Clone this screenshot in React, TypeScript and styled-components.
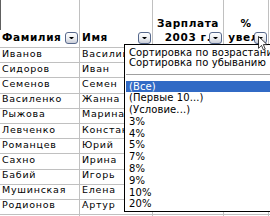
import React from "react";
import styled, { createGlobalStyle } from "styled-components";

const GlobalStyle = createGlobalStyle`
  html, body {
    margin: 0;
    padding: 0;
    background: #ffffff;
  }
  body {
    width: 270px;
    height: 216px;
    overflow: hidden;
    font-family: "DejaVu Sans", Verdana, sans-serif;
    color: #000;
  }
`;

const people: [string, string][] = [
  ["Иванов", "Василий"],
  ["Сидоров", "Иван"],
  ["Семенов", "Семен"],
  ["Василенко", "Жанна"],
  ["Рыжова", "Марина"],
  ["Левченко", "Константин"],
  ["Романцев", "Юрий"],
  ["Сахно", "Ирина"],
  ["Бабий", "Игорь"],
  ["Мушинская", "Елена"],
  ["Родионов", "Артур"],
  ["", ""],
];

const values = ["3%", "4%", "5%", "7%", "8%", "9%", "10%", "20%"];

const App = () => {
  return (
    <>
      <GlobalStyle />
      <Sheet>
        <HeadCell $first>
          Фамилия
          <FilterButton />
        </HeadCell>
        <HeadCell>
          Имя
          <FilterButton />
        </HeadCell>
        <HeadCell $align="center">
          <span>Зарплата</span>
          <span>2003 г.</span>
          <FilterButton />
        </HeadCell>
        <HeadCell $align="center">
          <span>%</span>
          <span>увел.</span>
          <FilterButton />
        </HeadCell>
        <HeadCell />

        {people.map(([last, first], i) => (
          <React.Fragment key={i}>
            <Cell>{last}</Cell>
            <Cell>{first}</Cell>
            <Cell />
            <Cell />
            <Cell />
          </React.Fragment>
        ))}

        <Menu>
          <SortItem>Сортировка по возрастанию</SortItem>
          <SortItem>Сортировка по убыванию</SortItem>
          <Separator />
          <ListItem $selected>(Все)</ListItem>
          <ListItem>(Первые 10...)</ListItem>
          <ListItem>(Условие...)</ListItem>
          {values.map((v) => (
            <ListItem key={v}>{v}</ListItem>
          ))}
        </Menu>

        <Cursor width="10" height="15" viewBox="0 0 13 20">
          <path
            d="M0.5 0.5 L0.5 16.5 L4.5 12.5 L7 18.5 L9.5 17.5 L7 11.5 L12 11.5 Z"
            fill="#ffffff"
            stroke="#000000"
            strokeWidth="1"
            strokeLinejoin="miter"
          />
        </Cursor>
      </Sheet>
    </>
  );
};

const Sheet = styled.div`
  position: relative;
  width: 270px;
  height: 216px;
  overflow: hidden;
  display: grid;
  grid-template-columns: 80px 73px 71px 45px 1fr;
  grid-template-rows: 48px repeat(12, 15.2px);
  background: #fff;
`;

const HeadCell = styled.div<{ $align?: "left" | "center"; $first?: boolean }>`
  position: relative;
  box-sizing: border-box;
  border-right: 1px solid #c0c0c0;
  border-bottom: 1px solid #c0c0c0;
  display: flex;
  flex-direction: column;
  justify-content: flex-end;
  align-items: ${(p) => (p.$align === "center" ? "center" : "flex-start")};
  padding: 0 2px 3px;
  font-size: 10.5px;
  font-weight: bold;
  letter-spacing: 0.6px;
  line-height: 14px;
  white-space: nowrap;
  overflow: hidden;

  &::before {
    content: "";
    display: ${(p) => (p.$first ? "block" : "none")};
    position: absolute;
    left: 0;
    top: 0;
    width: 1px;
    height: 30px;
    background: #606060;
  }
`;

const FilterButton = styled.span`
  position: absolute;
  right: 1px;
  bottom: 3px;
  width: 13px;
  height: 12px;
  box-sizing: border-box;
  border: 1px solid #56688c;
  border-radius: 3px;
  background: linear-gradient(#ffffff, #eceef2 55%, #c9cdd8);
  display: flex;
  align-items: center;
  justify-content: center;

  &::after {
    content: "";
    width: 1px;
    height: 0;
    border-left: 2px solid transparent;
    border-right: 2px solid transparent;
    border-top: 2px solid #000;
  }
`;

const Cell = styled.div`
  box-sizing: border-box;
  border-right: 1px solid #c0c0c0;
  border-bottom: 1px solid #c0c0c0;
  display: flex;
  align-items: center;
  padding: 0 2px 3px;
  font-size: 9.5px;
  letter-spacing: 0.75px;
  line-height: 10px;
  white-space: nowrap;
  overflow: hidden;
`;

const Menu = styled.div`
  position: absolute;
  left: 124px;
  top: 44px;
  width: 170px;
  height: 168px;
  box-sizing: border-box;
  border: 1px solid #000;
  background: #fff;
  padding-top: 2.5px;
  font-size: 10px;
  letter-spacing: 0.1px;
  line-height: 10px;
  z-index: 2;
`;

const SortItem = styled.div`
  height: 10px;
  padding-left: 4px;
  white-space: nowrap;
`;

const Separator = styled.div`
  height: 1px;
  margin: 6px 1px 6px;
  background: #a0a0a0;
`;

const ListItem = styled.div<{ $selected?: boolean }>`
  height: 11.8px;
  line-height: 11.8px;
  margin-left: 1px;
  padding-left: 3px;
  white-space: nowrap;
  background: ${(p) => (p.$selected ? "#316ac5" : "transparent")};
  color: ${(p) => (p.$selected ? "#ffffff" : "#000000")};
`;

const Cursor = styled.svg`
  position: absolute;
  left: 258px;
  top: 36px;
  z-index: 3;
`;

export default App;
